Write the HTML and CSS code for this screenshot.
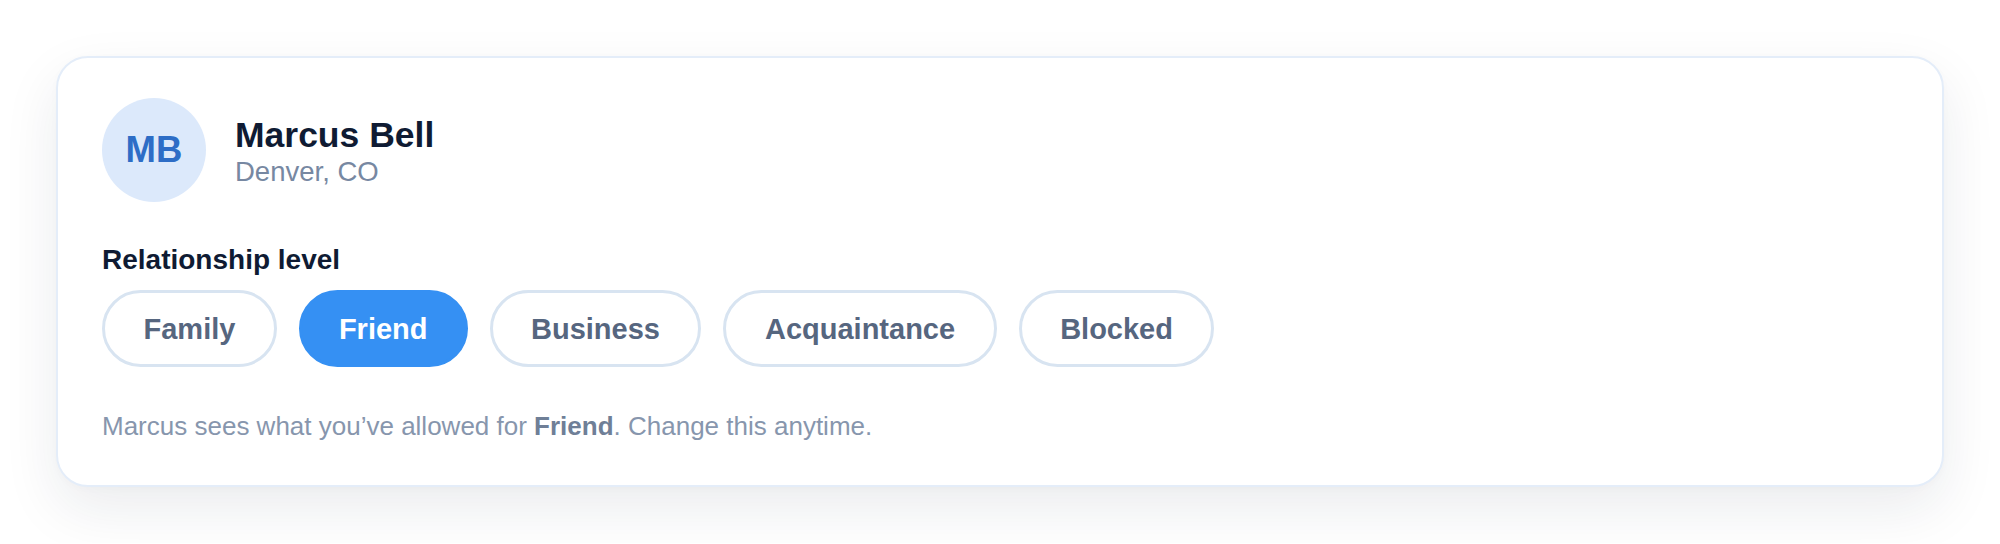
FILE: index.html
```html
<!DOCTYPE html>
<html lang="en">
<head>
<meta charset="utf-8">
<title>Marcus Bell – Relationship level</title>
<link rel="stylesheet" href="styles.css">
</head>
<body>
  <main class="page">
    <section class="card">
      <header class="profile">
        <div class="avatar">MB</div>
        <div class="identity">
          <div class="name">Marcus Bell</div>
          <div class="location">Denver, CO</div>
        </div>
      </header>
      <div class="label">Relationship level</div>
      <div class="levels">
        <button class="pill">Family</button>
        <button class="pill pill-active">Friend</button>
        <button class="pill">Business</button>
        <button class="pill">Acquaintance</button>
        <button class="pill">Blocked</button>
      </div>
      <p class="note">Marcus sees what you’ve allowed for <strong>Friend</strong>. Change this anytime.</p>
    </section>
  </main>
</body>
</html>
```
FILE: styles.css
```css
* {
  box-sizing: border-box;
}

html, body {
  margin: 0;
  padding: 0;
  background: #ffffff;
}

body {
  font-family: "Liberation Sans", Arial, sans-serif;
}

.page {
  padding: 56px;
}

.card {
  background: #ffffff;
  border: 2px solid #e4edf9;
  border-radius: 32px;
  padding: 40px 44px 43px;
  box-shadow: 0 22px 56px rgba(20, 30, 55, 0.085), 0 2px 8px rgba(20, 30, 55, 0.02);
}

.profile {
  display: flex;
  align-items: center;
  gap: 29px;
}

.avatar {
  width: 104px;
  height: 104px;
  border-radius: 50%;
  background: #dce9fb;
  color: #2d6dc6;
  font-weight: 700;
  font-size: 36.5px;
  display: flex;
  align-items: center;
  justify-content: center;
  flex-shrink: 0;
}

.identity {
  display: flex;
  flex-direction: column;
  margin-top: 2px;
}

.name {
  font-size: 35.5px;
  font-weight: 700;
  color: #0f1b33;
}

.location {
  font-size: 27.5px;
  color: #7788a2;
}

.label {
  margin-top: 42px;
  margin-bottom: 14px;
  font-size: 28px;
  font-weight: 700;
  color: #0f1b33;
}

.levels {
  display: flex;
  gap: 22px;
}

.pill {
  font-family: "Liberation Sans", Arial, sans-serif;
  font-size: 29px;
  font-weight: 700;
  line-height: 34px;
  padding: 18.5px 38.5px;
  border: 3px solid #d8e4f1;
  border-radius: 999px;
  background: #ffffff;
  color: #56667f;
  cursor: pointer;
}

.pill-active {
  background: #3590f3;
  border-color: #3590f3;
  padding-left: 37px;
  padding-right: 37px;
  color: #ffffff;
}

.note {
  margin: 44px 0 0;
  font-size: 26px;
  color: #8796ad;
}

.note strong {
  color: #6f7f97;
  font-weight: 700;
}
```
